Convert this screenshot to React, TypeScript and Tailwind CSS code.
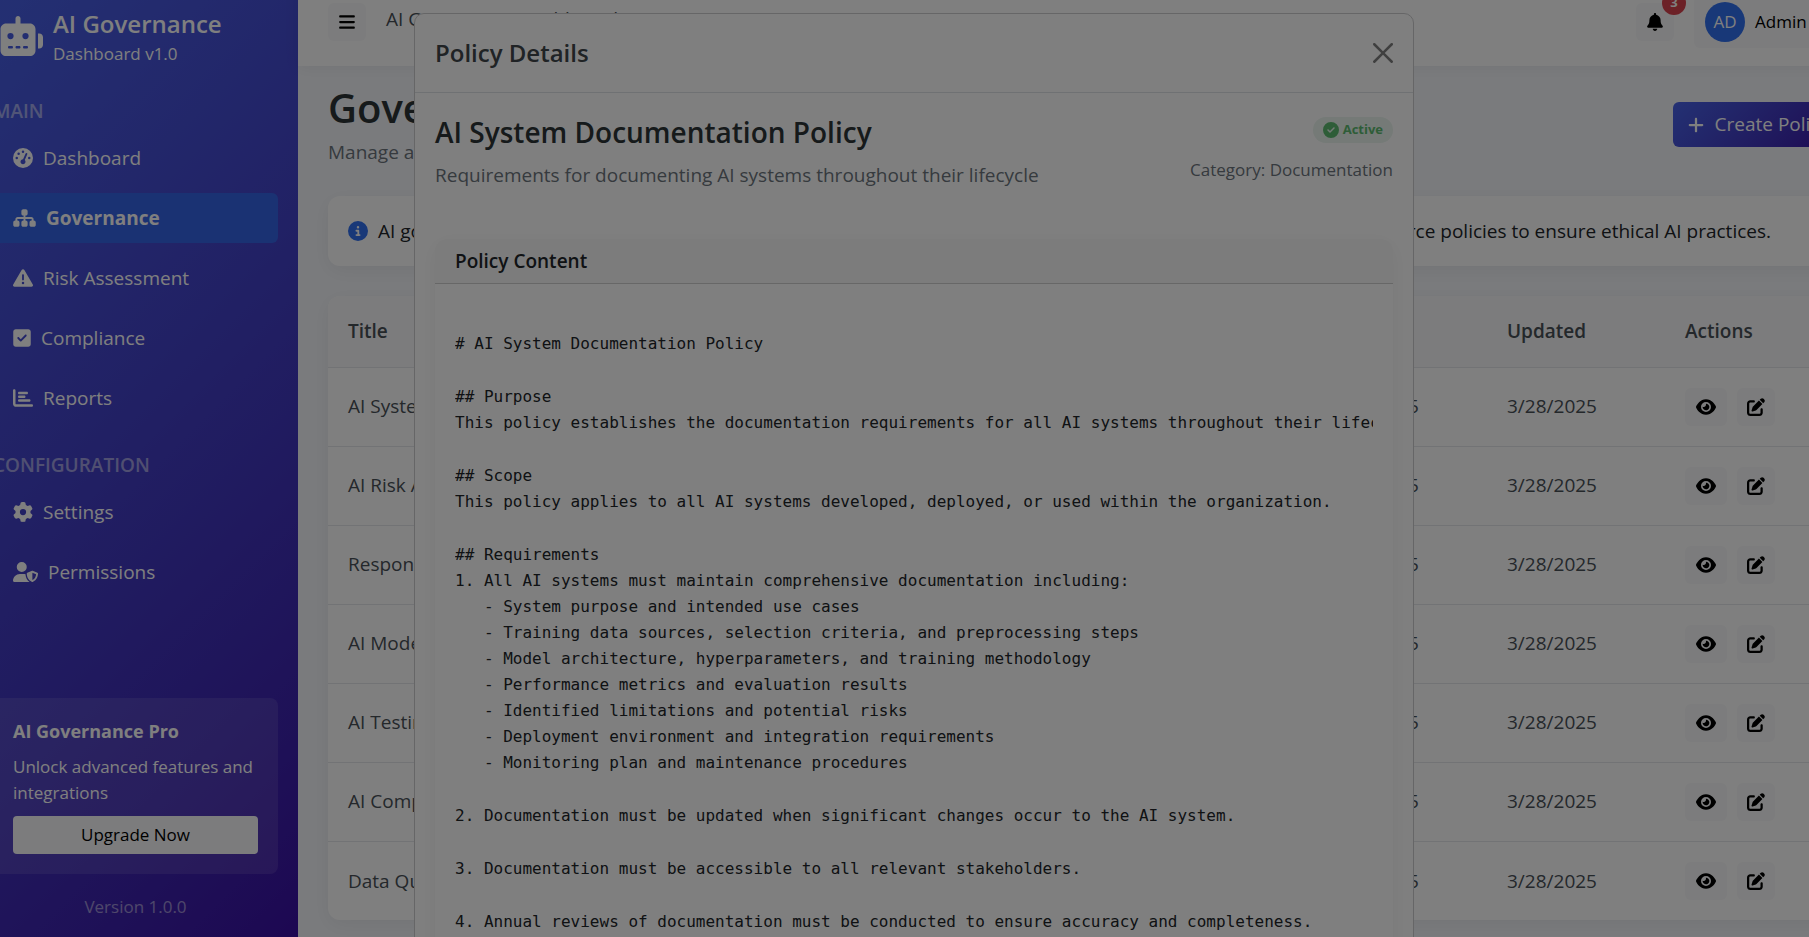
import React from "react";
import type { IconType } from "react-icons";
import {
  FaBars,
  FaBell,
  FaChartBar,
  FaCircleCheck,
  FaCircleInfo,
  FaEye,
  FaGaugeHigh,
  FaGear,
  FaPenToSquare,
  FaPlus,
  FaRobot,
  FaSitemap,
  FaSquareCheck,
  FaTriangleExclamation,
  FaUserShield,
} from "react-icons/fa6";

type NavEntry = { label: string; icon: IconType; iconClass: string; active?: boolean };

const mainNav: NavEntry[] = [
  { label: "Dashboard", icon: FaGaugeHigh, iconClass: "h-5 w-5" },
  { label: "Governance", icon: FaSitemap, iconClass: "h-5 w-[23px]", active: true },
  { label: "Risk Assessment", icon: FaTriangleExclamation, iconClass: "h-5 w-5" },
  { label: "Compliance", icon: FaSquareCheck, iconClass: "h-5 w-[18px]" },
  { label: "Reports", icon: FaChartBar, iconClass: "h-5 w-5" },
];

const configNav: NavEntry[] = [
  { label: "Settings", icon: FaGear, iconClass: "h-5 w-5" },
  { label: "Permissions", icon: FaUserShield, iconClass: "h-5 w-[25px]" },
];

const policies = [
  "AI System Documentation Policy",
  "AI Risk Assessment Policy",
  "Responsible AI Policy",
  "AI Model Monitoring Policy",
  "AI Testing Policy",
  "AI Compliance Policy",
  "Data Quality Policy",
];

const policySections = [
  "# AI System Documentation Policy",
  "## Purpose\nThis policy establishes the documentation requirements for all AI systems throughout their lifecycle.",
  "## Scope\nThis policy applies to all AI systems developed, deployed, or used within the organization.",
  "## Requirements\n1. All AI systems must maintain comprehensive documentation including:\n   - System purpose and intended use cases\n   - Training data sources, selection criteria, and preprocessing steps\n   - Model architecture, hyperparameters, and training methodology\n   - Performance metrics and evaluation results\n   - Identified limitations and potential risks\n   - Deployment environment and integration requirements\n   - Monitoring plan and maintenance procedures",
  "2. Documentation must be updated when significant changes occur to the AI system.",
  "3. Documentation must be accessible to all relevant stakeholders.",
  "4. Annual reviews of documentation must be conducted to ensure accuracy and completeness.",
];

function NavList({ title, items }: { title: string; items: NavEntry[] }) {
  return (
    <section>
      <h2 className="leading-6 font-semibold text-white/50">{title}</h2>
      <ul className="mt-2.5 flex flex-col gap-2.5">
        {items.map(({ label, icon: Icon, iconClass, active }) => (
          <li key={label}>
            <a
              href="#"
              className={
                active
                  ? "flex h-[50px] items-center gap-2.5 rounded-md bg-[#3565e6] px-5 font-bold text-white"
                  : "flex h-[50px] items-center gap-2.5 rounded-md px-5 text-white"
              }
            >
              <Icon className={iconClass} />
              {label}
            </a>
          </li>
        ))}
      </ul>
    </section>
  );
}

function Sidebar() {
  return (
    <aside className="flex w-[325px] shrink-0 flex-col bg-linear-135 from-[#4862e8] to-[#3a0ca3] px-5 pt-7 pb-[39px] text-white">
      <div className="flex items-center gap-2.5">
        <FaRobot className="h-10 w-[50px]" />
        <div>
          <div className="text-2xl leading-9 font-semibold">AI Governance</div>
          <div className="text-[17px] leading-6">Dashboard v1.0</div>
        </div>
      </div>
      <nav className="mt-[33px] flex flex-col gap-[30px]">
        <NavList title="MAIN" items={mainNav} />
        <NavList title="CONFIGURATION" items={configNav} />
      </nav>
      <div className="mt-auto rounded-lg bg-white/10 p-5">
        <h3 className="text-lg leading-[26px] font-bold">AI Governance Pro</h3>
        <p className="mt-2.5 text-[17px] leading-[26px]">Unlock advanced features and integrations</p>
        <button className="mt-2.5 h-[38px] w-full rounded-sm bg-[#f8f9fa] text-[17px] text-black">
          Upgrade Now
        </button>
      </div>
      <div className="mt-5 text-center text-[17px] leading-[26px] text-white/50">Version 1.0.0</div>
    </aside>
  );
}

function TopBar() {
  return (
    <header className="flex h-[88px] items-center bg-white px-[30px] shadow-[0_2px_15px_rgba(0,0,0,0.06)]">
      <button aria-label="Toggle menu" className="flex size-[38px] items-center justify-center rounded-md bg-[#f8f9fa] text-black">
        <FaBars className="size-[18px]" />
      </button>
      <span className="ml-5 pb-1.5 text-[#495057]">AI Governance Dashboard</span>
      <div className="ml-auto flex items-center gap-5">
        <button aria-label="Notifications" className="relative flex size-[38px] items-center justify-center rounded-md bg-[#f8f9fa] text-black">
          <FaBell className="size-[18px]" />
          <span className="absolute -top-3 -right-3 flex size-6 items-center justify-center rounded-full bg-[#d9434e] text-[13px] font-bold text-white">
            3
          </span>
        </button>
        <button className="flex h-[52px] w-[149px] items-center gap-2.5 rounded-md bg-[#f8f9fa] pl-[11px] text-[17px] text-black">
          <span className="flex size-10 items-center justify-center rounded-full bg-[#3070f0] text-white">AD</span>
          Admin
          <span className="border-x-[5px] border-t-[5px] border-x-transparent border-t-black" />
        </button>
      </div>
    </header>
  );
}

function PolicyTable() {
  return (
    <div className="mt-[30px] overflow-hidden rounded-xl bg-white shadow-[0_5px_20px_rgba(0,0,0,0.06)]">
      <table className="w-full table-fixed text-left text-[#495057]">
        <thead className="bg-[#f8f9fa]">
          <tr className="h-[71px] border-b border-[#e4e7ea]">
            <th className="px-5 font-semibold">Title</th>
            <th className="w-[178px] px-5 font-semibold">Created</th>
            <th className="w-[178px] px-5 font-semibold">Updated</th>
            <th className="w-[178px] px-5 font-semibold">Actions</th>
          </tr>
        </thead>
        <tbody>
          {policies.map((title) => (
            <tr key={title} className="h-[79px] border-b border-[#e4e7ea] last:border-b-0">
              <td className="px-5">{title}</td>
              <td className="px-5">3/28/2025</td>
              <td className="px-5">3/28/2025</td>
              <td className="px-5">
                <div className="flex gap-2.5 text-black">
                  <button aria-label={`View ${title}`} className="flex h-[38px] w-[42px] items-center justify-center rounded-md bg-[#f8f9fa]">
                    <FaEye className="h-[18px] w-5" />
                  </button>
                  <button aria-label={`Edit ${title}`} className="flex h-[38px] w-[38px] items-center justify-center rounded-md bg-[#f8f9fa]">
                    <FaPenToSquare className="size-[18px]" />
                  </button>
                </div>
              </td>
            </tr>
          ))}
        </tbody>
      </table>
    </div>
  );
}

function PolicyModal() {
  return (
    <div role="dialog" aria-labelledby="policy-dialog-title" className="w-[1000px] rounded-[10px] border border-[#cccdcf] bg-white">
      <div className="flex h-[79px] items-center justify-between border-b border-[#dee2e6] px-5">
        <h2 id="policy-dialog-title" className="text-2xl font-semibold text-[#40464b]">Policy Details</h2>
        <button aria-label="Close" className="text-black/50">
          <svg viewBox="0 0 16 16" fill="currentColor" className="size-5">
            <path d="M.293.293a1 1 0 0 1 1.414 0L8 6.586 14.293.293a1 1 0 1 1 1.414 1.414L9.414 8l6.293 6.293a1 1 0 0 1-1.414 1.414L8 9.414l-6.293 6.293a1 1 0 0 1-1.414-1.414L6.586 8 .293 1.707a1 1 0 0 1 0-1.414z" />
          </svg>
        </button>
      </div>
      <div className="p-5">
        <div className="flex justify-between">
          <div>
            <h3 className="text-[28px] leading-[38px] font-semibold text-[#2d3436]">AI System Documentation Policy</h3>
            <p className="mt-[9px] leading-[30px] text-[#6c757d]">
              Requirements for documenting AI systems throughout their lifecycle
            </p>
          </div>
          <div className="flex flex-col items-end pt-1">
            <span className="flex h-[26px] items-center gap-1 rounded-full bg-[#eaf5ee] px-2.5 text-[13px] font-bold text-[#5dbb70]">
              <FaCircleCheck className="size-4" />
              Active
            </span>
            <span className="mt-3.5 text-[17px] leading-[26px] text-[#6c757d]">Category: Documentation</span>
          </div>
        </div>
        <section className="mt-[49px] rounded-xl bg-white shadow-[0_5px_20px_rgba(0,0,0,0.05)]">
          <h4 className="h-[45px] rounded-t-xl border-b border-[#cfcfcf] bg-[#f8f8f8] px-5 leading-[45px] font-semibold text-[#212529]">
            Policy Content
          </h4>
          <div className="px-5 pt-[47px] pb-5">
            <div className="flex flex-col gap-[27px] overflow-hidden text-[#212529]">
              {policySections.map((text) => (
                <pre key={text} className="font-['DejaVu_Sans_Mono',monospace] text-base leading-[26px]">
                  {text}
                </pre>
              ))}
            </div>
          </div>
        </section>
      </div>
    </div>
  );
}

export default function App() {
  return (
    <div className="h-screen overflow-hidden bg-[#f5f7fb] font-['Open_Sans',sans-serif] text-[19px] text-[#212529]">
      <div className="relative -mt-[22px] -mr-16 -ml-[27px] flex h-[calc(100vh+44px)]">
        <Sidebar />
        <div className="min-w-0 flex-1">
          <TopBar />
          <main className="px-[30px] pt-[18px]">
            <div className="flex items-start justify-between">
              <div>
                <h1 className="text-[40px] leading-[48px] font-semibold text-[#2d3436]">Governance</h1>
                <p className="mt-[5px] leading-[30px] text-[#6c757d]">Manage and monitor AI policies</p>
              </div>
              <button className="mt-[18px] flex h-[45px] items-center gap-2.5 rounded-md bg-linear-135 from-[#4862e8] to-[#3a0ca3] px-3.5 text-white">
                <FaPlus className="size-[18px]" />
                Create Policy
              </button>
            </div>
            <div className="mt-[29px] flex h-[70px] items-center justify-between gap-2.5 rounded-xl bg-white px-5 text-[#212529] shadow-[0_5px_20px_rgba(0,0,0,0.06)]">
              <span className="flex items-center gap-2.5">
                <FaCircleInfo className="size-5 text-[#3070f0]" />
                AI governance helps organizations manage their AI systems.
              </span>
              <span className="pr-[52px]">Create and enforce policies to ensure ethical AI practices.</span>
            </div>
            <PolicyTable />
          </main>
        </div>
        <div className="absolute inset-0 flex items-start justify-center overflow-hidden pt-[35px] pr-[18px]">
          <PolicyModal />
        </div>
        <div className="pointer-events-none absolute inset-0 bg-black/50" />
      </div>
    </div>
  );
}
